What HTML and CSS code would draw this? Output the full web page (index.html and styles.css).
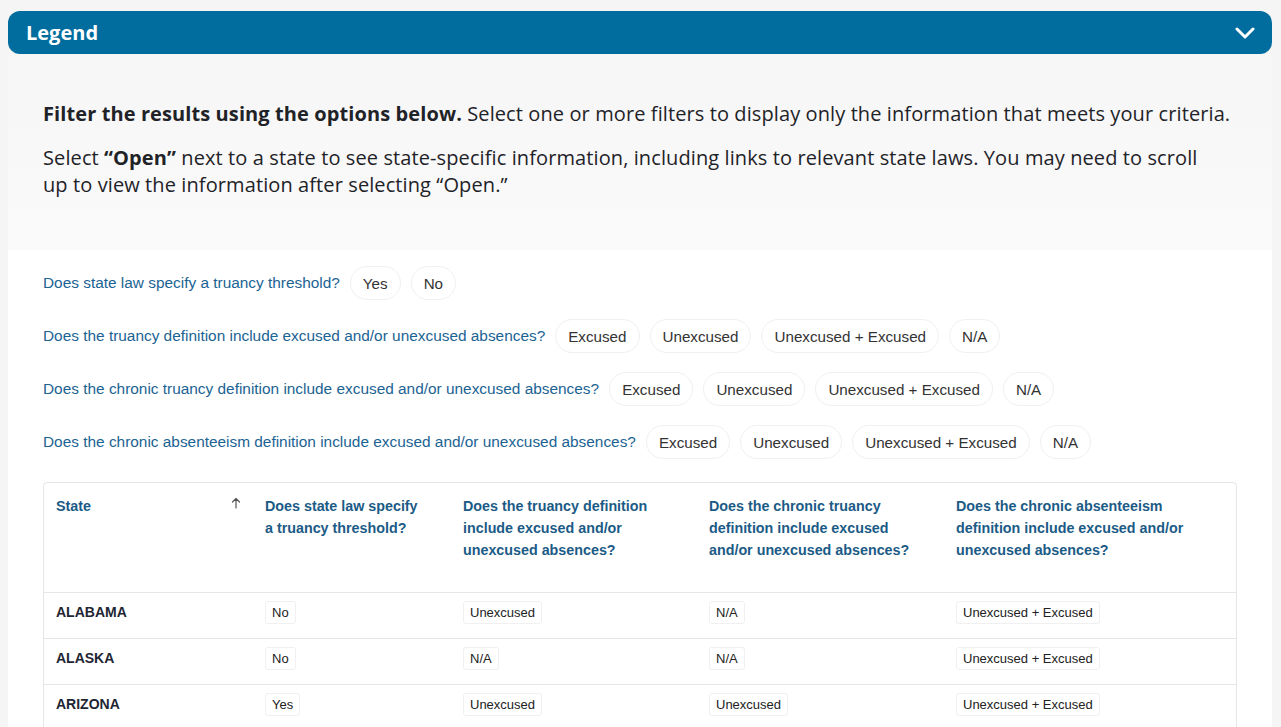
FILE: index.html
```html
<!DOCTYPE html>
<html lang="en">
<head>
<meta charset="utf-8">
<title>Legend</title>
<link rel="stylesheet" href="styles.css">
</head>
<body>
<div class="page">
  <div class="legend-bar">
    <span class="legend-title">Legend</span>
    <svg class="chevron" width="20" height="12" viewBox="0 0 20 12" aria-hidden="true"><path d="M2 2 L10 10 L18 2" fill="none" stroke="#fff" stroke-width="3" stroke-linecap="round" stroke-linejoin="round"/></svg>
  </div>
  <div class="intro">
    <p class="p1"><strong>Filter the results using the options below.</strong> Select one or more filters to display only the information that meets your criteria.</p>
    <p class="p2">Select <strong>“Open”</strong> next to a state to see state-specific information, including links to relevant state laws. You may need to scroll up to view the information after selecting “Open.”</p>
  </div>
  <div class="panel">
    <div class="filters">
      <div class="filter-row">
        <span class="question">Does state law specify a truancy threshold?</span>
        <button class="pill">Yes</button>
        <button class="pill">No</button>
      </div>
      <div class="filter-row">
        <span class="question">Does the truancy definition include excused and/or unexcused absences?</span>
        <button class="pill">Excused</button>
        <button class="pill">Unexcused</button>
        <button class="pill">Unexcused + Excused</button>
        <button class="pill">N/A</button>
      </div>
      <div class="filter-row">
        <span class="question">Does the chronic truancy definition include excused and/or unexcused absences?</span>
        <button class="pill">Excused</button>
        <button class="pill">Unexcused</button>
        <button class="pill">Unexcused + Excused</button>
        <button class="pill">N/A</button>
      </div>
      <div class="filter-row">
        <span class="question">Does the chronic absenteeism definition include excused and/or unexcused absences?</span>
        <button class="pill">Excused</button>
        <button class="pill">Unexcused</button>
        <button class="pill">Unexcused + Excused</button>
        <button class="pill">N/A</button>
      </div>
    </div>
    <div class="table-wrap">
      <table class="data">
        <colgroup>
          <col class="c1"><col class="c2"><col class="c3"><col class="c4"><col class="c5">
        </colgroup>
        <thead>
          <tr>
            <th><div class="th-state"><span>State</span><svg class="sort" width="10" height="12" viewBox="0 0 10 12" aria-hidden="true"><path d="M5 11 V1.5 M1.5 5 L5 1.5 L8.5 5" fill="none" stroke="#555" stroke-width="1.2" stroke-linecap="round" stroke-linejoin="round"/></svg></div></th>
            <th>Does state law specify<br>a truancy threshold?</th>
            <th>Does the truancy definition<br>include excused and/or<br>unexcused absences?</th>
            <th>Does the chronic truancy<br>definition include excused<br>and/or unexcused absences?</th>
            <th>Does the chronic absenteeism<br>definition include excused and/or<br>unexcused absences?</th>
          </tr>
        </thead>
        <tbody>
          <tr>
            <td class="state">ALABAMA</td>
            <td><span class="badge">No</span></td>
            <td><span class="badge">Unexcused</span></td>
            <td><span class="badge">N/A</span></td>
            <td><span class="badge">Unexcused + Excused</span></td>
          </tr>
          <tr>
            <td class="state">ALASKA</td>
            <td><span class="badge">No</span></td>
            <td><span class="badge">N/A</span></td>
            <td><span class="badge">N/A</span></td>
            <td><span class="badge">Unexcused + Excused</span></td>
          </tr>
          <tr>
            <td class="state">ARIZONA</td>
            <td><span class="badge">Yes</span></td>
            <td><span class="badge">Unexcused</span></td>
            <td><span class="badge">Unexcused</span></td>
            <td><span class="badge">Unexcused + Excused</span></td>
          </tr>
        </tbody>
      </table>
    </div>
  </div>
</div>
</body>
</html>
```
FILE: styles.css
```css
html, body {
  margin: 0;
  padding: 0;
}
body {
  background: #f5f5f5;
  font-family: "Liberation Sans", Arial, sans-serif;
  color: #222;
}
.page {
  padding: 11px 9px 0 8px;
}
.legend-bar {
  height: 43px;
  box-sizing: border-box;
  background: #016d9e;
  border-radius: 12px;
  display: flex;
  align-items: center;
  justify-content: space-between;
  padding: 0 17px 0 18px;
}
.legend-title {
  color: #fff;
  font-family: "Open Sans", sans-serif;
  font-weight: 700;
  font-size: 20px;
}
.chevron {
  display: block;
}
.intro {
  padding: 46px 35px 52px 35px;
  background: linear-gradient(#f6f6f6, #fafafa);
  font-family: "Open Sans", sans-serif;
  font-size: 20px;
  line-height: 27px;
  color: #1f2328;
  letter-spacing: 0.1px;
}
.intro p {
  margin: 0 0 17px 0;
}
.intro .p2 {
  max-width: 1182px;
  margin-bottom: 0;
}
.intro strong {
  font-weight: 700;
}
.panel {
  background: #fff;
  padding: 16px 35px 60px 35px;
}
.filters {
  display: flex;
  flex-direction: column;
  gap: 19px;
}
.filter-row {
  display: flex;
  align-items: center;
  gap: 10px;
}
.question {
  color: #1b6393;
  font-size: 15.4px;
}
.pill {
  height: 34px;
  box-sizing: border-box;
  padding: 0 12px;
  border: 1px solid #f0f0f0;
  border-radius: 17px;
  background: #fff;
  font-family: "Liberation Sans", Arial, sans-serif;
  font-size: 15.2px;
  color: #333;
}
.table-wrap {
  margin-top: 23px;
  border: 1px solid #e6e6e6;
  border-radius: 4px;
  width: 1194px;
  box-sizing: border-box;
}
.data {
  width: 100%;
  border-collapse: collapse;
  table-layout: fixed;
}
.c1 { width: 209px; }
.c2 { width: 198px; }
.c3 { width: 246px; }
.c4 { width: 247px; }
.c5 { width: auto; }
.data th {
  text-align: left;
  vertical-align: top;
  font-size: 14.3px;
  line-height: 22px;
  font-weight: 700;
  color: #1b5b86;
  padding: 12px 12px 0 12px;
  height: 109px;
  box-sizing: border-box;
  border-bottom: 1px solid #e6e6e6;
}
.th-state {
  display: flex;
  justify-content: space-between;
  align-items: flex-start;
}
.sort {
  display: block;
  margin-top: 2px;
}
.data td {
  height: 46px;
  box-sizing: border-box;
  padding: 0 12px 6px 12px;
  border-bottom: 1px solid #e6e6e6;
  font-size: 13px;
  color: #222;
  vertical-align: middle;
}
.data tbody tr:last-child td {
  border-bottom: none;
}
.data td.state {
  font-weight: 700;
  font-size: 14px;
  color: #1e2633;
}
.badge {
  display: inline-block;
  padding: 3px 6px;
  border: 1px solid #f0f0f0;
  border-radius: 3px;
  background: #fff;
  line-height: 15px;
}
```
